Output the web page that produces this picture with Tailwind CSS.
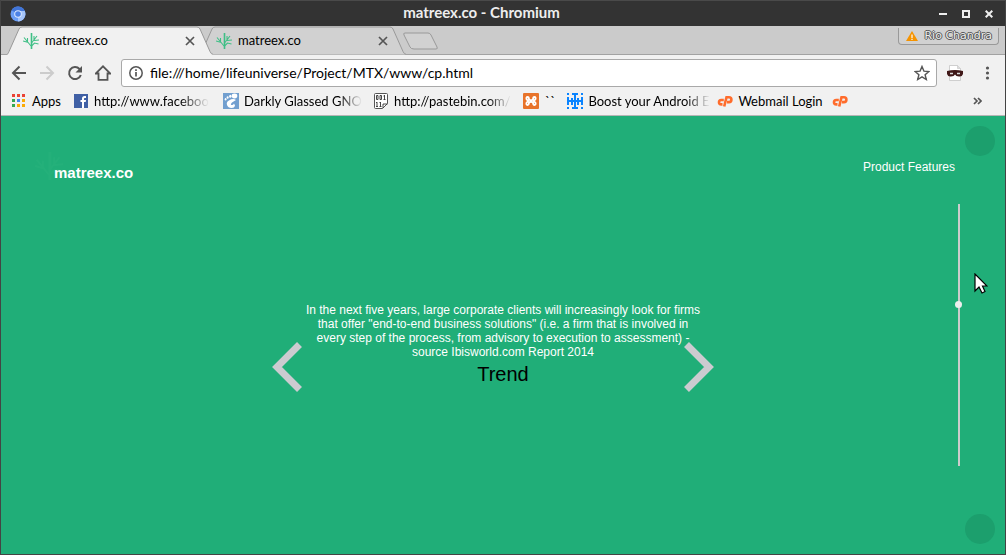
<!DOCTYPE html>
<html lang="en">
<head>
<meta charset="utf-8">
<meta name="viewport" content="width=device-width, initial-scale=1">
<title>matreex.co - Chromium</title>
<script src="https://cdn.jsdelivr.net/npm/@tailwindcss/browser@4"></script>
</head>
<body class="font-['Lato',sans-serif] text-sm text-black">
<svg class="hidden">
  <symbol id="tree" viewBox="0 0 16 16"><g fill="none" stroke="#3fbf86"><path d="M8.500 0v16" stroke-width="1.600"/><path d="M8 13 1 4.500M5.500 9.500 0 8M4.500 8.500V5M8.500 10 14 3M11 7V3M11 7.500l5-.5M8.500 13l3-3 4 1" stroke-width="1.100"/></g></symbol>
  <symbol id="tab-close" viewBox="0 0 10 10"><path d="m1 1 8 8M9 1 1 9" fill="none" stroke="#555" stroke-width="1.700"/></symbol>
  <symbol id="cpanel" viewBox="0 0 16 12"><path d="M6.800 5H4.200a2.200 2.200 0 0 0 0 4.400h1.300M7.200 11.500 9.500 2.300H12a2.300 2.300 0 0 1 0 4.800H10" fill="none" stroke="#ff6c2c" stroke-width="2.600"/></symbol>
</svg>

<div class="flex min-h-screen flex-col border-x border-b border-[#444] bg-[#f1f1f1]">
  <header class="flex h-[26px] items-center border-t border-[#4a4a4a] bg-[#333] pr-[10px] pl-[9px]">
    <svg class="size-4" viewBox="0 0 16 16"><circle cx="8" cy="8" r="7.500" fill="#6a9df5"/><path d="M8 8 1.500 4.200A7.500 7.500 0 0 1 14.800 5z" fill="#4175d8"/><path d="M8 15.500A7.500 7.500 0 0 0 14.800 5H8z" fill="#a5c5fb"/><circle cx="8" cy="8" r="3.800" fill="#dce8fd"/><circle cx="8" cy="8" r="2.800" fill="#4c82e6"/></svg>
    <h1 class="flex-1 pb-[3px] text-center text-[15px] leading-5 font-bold text-[#eee]">matreex.co - Chromium</h1>
    <div class="flex items-center gap-[11px] text-[#eee]">
      <button aria-label="Minimize" class="flex size-3 items-center justify-center"><span class="h-[2px] w-2 bg-current"></span></button>
      <button aria-label="Maximize" class="flex size-3 items-center justify-center"><span class="size-2 border-2 border-current"></span></button>
      <button aria-label="Close window" class="flex size-3 items-center justify-center"><svg class="size-2" viewBox="0 0 8 8"><path d="m.7.7 6.600 6.600M7.300.7.7 7.300" stroke="currentColor" stroke-width="2"/></svg></button>
    </div>
  </header>

  <nav aria-label="Tabs" class="flex h-[29px] items-start bg-[#cbcbcb] pl-[6px] text-[13px] shadow-[inset_0_-1px_0_#a2a2a2]">
    <div class="relative z-10 flex h-[29px] w-[206px] items-center pl-4">
      <svg class="absolute inset-0 h-[29px] w-[206px]" viewBox="0 0 206 29"><path d="M-1 29v-.5c2 0 2-1 3-3L12 3q1-2 3-2h175q2 0 3 2l10 22.500q1 3 4 3v.5z" fill="#f1f1f1"/><path d="M-1 28.500c2 0 2-1 3-3L12 3q1-2 3-2h175q2 0 3 2l10 22.500q1 3 4 3" fill="none" stroke="#999"/></svg>
      <svg class="relative size-4"><use href="#tree"/></svg>
      <button class="relative ml-[6px] flex-1 text-left">matreex.co</button>
      <button aria-label="Close tab" class="relative mr-[18px]"><svg class="size-[10px]"><use href="#tab-close"/></svg></button>
    </div>
    <div class="relative -ml-[13px] flex h-[29px] w-[206px] items-center pl-4">
      <svg class="absolute inset-0 h-[29px] w-[206px]" viewBox="0 0 206 29"><path d="M-1 28.500c2 0 2-1 3-3L12 3q1-2 3-2h175q2 0 3 2l10 22.500q1 3 4 3" fill="#d1d1d1" stroke="#999"/></svg>
      <svg class="relative size-4"><use href="#tree"/></svg>
      <button class="relative ml-[6px] flex-1 text-left">matreex.co</button>
      <button aria-label="Close tab" class="relative mr-[18px]"><svg class="size-[10px]"><use href="#tab-close"/></svg></button>
    </div>
    <button aria-label="New tab" class="-ml-1 pt-[6px]"><svg class="h-[19px] w-[38px]" viewBox="0 0 38 19"><path d="M3 1h23q2 0 3 2l6 12q1 2-1 2H12q-3 0-4-2L2 3q-1-2 1-2z" fill="#d1d1d1" stroke="#999"/></svg></button>
    <button class="mt-[2px] mr-[6px] ml-auto flex h-[17px] items-center gap-[6px] rounded-b-[4px] border border-t-0 border-[#999] bg-[#d1d1d1] pr-[6px] pl-[7px] font-['DejaVu_Sans',sans-serif] text-[11px] text-[#eee] [text-shadow:1px_0_#555,-1px_0_#555,0_1px_#555,0_-1px_#555]">
      <svg class="h-[10px] w-[12px]" viewBox="0 0 12 10"><path d="M6 0 12 10H0z" fill="#f59300"/><path d="M6 3.500V7M6 7.700v1.200" stroke="#fff" stroke-width="1.200"/></svg>
      Rio Chandra
    </button>
  </nav>

  <div class="flex h-9 items-center px-[10px]">
    <div class="flex items-center gap-3 text-[#555]">
      <button aria-label="Back"><svg class="size-4" viewBox="0 0 16 16" fill="none" stroke="currentColor" stroke-width="2"><path d="M15 8H2M8.500 1.500 2 8l6.500 6.500"/></svg></button>
      <button aria-label="Forward" class="text-[#ccc]"><svg class="size-4" viewBox="0 0 16 16" fill="none" stroke="currentColor" stroke-width="2"><path d="M1 8h13M7.500 1.500 14 8l-6.500 6.500"/></svg></button>
      <button aria-label="Reload"><svg class="size-4" viewBox="0 0 16 16" fill="none" stroke="currentColor" stroke-width="2"><path d="M13.800 10A6 6 0 1 1 12.500 4L14 5.500"/><path d="M15 1v6.500H8.500z" fill="currentColor" stroke="none"/></svg></button>
      <button aria-label="Home"><svg class="size-4" viewBox="0 0 16 16" fill="none" stroke="currentColor" stroke-width="1.800"><path d="M3.500 8.500v6.300h9V8.500h2.800L8 1.300.7 8.500z"/></svg></button>
    </div>
    <div class="ml-[10px] flex h-7 flex-1 items-center rounded-[3px] border border-[#a9a9a9] bg-white pr-[6px] pl-[7px]">
      <svg class="size-[14px]" viewBox="0 0 14 14" fill="none" stroke="#555"><circle cx="7" cy="7" r="6.200" stroke-width="1.500"/><path d="M7 6v4.500M7 3.200v1.700" stroke-width="1.700"/></svg>
      <input aria-label="Address" value="file:///home/lifeuniverse/Project/MTX/www/cp.html" class="ml-[7px] min-w-0 flex-1 bg-transparent outline-none">
      <button aria-label="Bookmark this page"><svg class="size-4" viewBox="0 0 16 16"><path d="m8 1.500 1.900 4.600 5 .4L11.100 9.700l1.200 4.800L8 11.900l-4.300 2.600 1.200-4.800L1.100 6.500l5-.4z" fill="none" stroke="#555" stroke-width="1.400"/></svg></button>
    </div>
    <button aria-label="Mask extension" class="ml-[10px]"><svg class="size-4" viewBox="0 0 16 16"><path d="M2.500.5h8l3 3v12h-11z" fill="#fff" stroke="#c4c4c4" stroke-width=".8"/><path d="M10.500.5v3h3" fill="#ddd" stroke="#c4c4c4" stroke-width=".6"/><path d="M0 6q8-2 16 0v3q-1 3-4 2.500-3 0-4-2-1 2-4 2Q1 12 0 9z" fill="#401818"/><path d="M3 8.500h3M10 8.500h3" stroke="#ddd" stroke-width="1.600"/></svg></button>
    <button aria-label="Menu" class="ml-4"><svg class="size-4" viewBox="0 0 16 16" fill="#555"><circle cx="8.500" cy="3" r="1.600"/><circle cx="8.500" cy="8" r="1.600"/><circle cx="8.500" cy="13" r="1.600"/></svg></button>
  </div>

  <nav aria-label="Bookmarks" class="flex h-[25px] items-center gap-3 border-b border-[#b6b6b6] pb-1 pl-[10px] text-[13px] leading-5 whitespace-nowrap">
    <a href="#" class="flex items-center gap-[5px]">
      <svg class="size-4" viewBox="0 0 16 16"><path d="M1 1h3v3H1zM6 1h3v3H6zM11 1h3v3h-3z" fill="#ea4335"/><path d="M1 6h3v3H1z" fill="#34a853"/><path d="M6 6h3v3H6z" fill="#4285f4"/><path d="M11 6h3v3h-3zM11 11h3v3h-3zM6 11h3v3H6z" fill="#fbab05"/><path d="M1 11h3v3H1z" fill="#34a853"/></svg>
      Apps</a>
    <a href="#" class="flex w-[138px] items-center gap-[5px]">
      <svg class="size-4 shrink-0" viewBox="0 0 16 16"><path d="M1 1h14v14H1z" fill="#4060a5"/><path d="M9 15V9H7.500V7H9V5.500Q9 3 11.500 3H13v2h-1.300q-.7 0-.7.800V7h2l-.3 2H11v6z" fill="#fff"/></svg>
      <span class="[mask-image:linear-gradient(to_right,black_75%,transparent)]">http://www.faceboo</span></a>
    <a href="#" class="flex w-[138px] items-center gap-[5px]">
      <svg class="size-4 shrink-0" viewBox="0 0 16 16"><path d="M0 0h16v16H0z" fill="#729fcf"/><g fill="#fff"><ellipse cx="11.500" cy="3" rx="2.800" ry="2.400"/><ellipse cx="7.300" cy="3.200" rx="1.200" ry="1.500"/><ellipse cx="4.600" cy="4.500" rx="1" ry="1.300"/><ellipse cx="2.600" cy="6.300" rx=".9" ry="1.200"/><path d="M13 7Q10 5 6 7.500 3 9 4 12q1 3 4.500 3 3 0 3.500-2.500l-1-2q-1 2-2.500 1.500T9 9.500z"/></g></svg>
      <span class="[mask-image:linear-gradient(to_right,black_80%,transparent)]">Darkly Glassed GNO</span></a>
    <a href="#" class="flex w-[138px] items-center gap-[5px]">
      <svg class="size-4 shrink-0" viewBox="0 0 16 16" fill="none" stroke="#555"><path d="M2.500.5h11q1 0 1 1v9l-5 5h-7q-1 0-1-1v-13q0-1 1-1z" fill="#fff"/><path d="M3.500 2.500h1.500v4H3.500zM7 2.500h1.500v4H7zM11.500 2v5M10.500 3h1M10.500 6.500h2M4 9v4.500M3 9.500h1M3 13.500h2M7.500 9v4.500M6.500 9.500h1M6.500 13.500h2M10 15v-4h4.500" stroke="#333" stroke-width=".9"/></svg>
      <span class="[mask-image:linear-gradient(to_right,black_80%,transparent)]">http://pastebin.com/</span></a>
    <a href="#" class="flex items-center gap-[6px]">
      <svg class="size-4" viewBox="0 0 16 16"><rect width="16" height="16" rx="1" fill="#e8732a"/><path d="M6 6.500Q6 4 4.500 4T3.500 6.200L5 8 3.500 9.800Q3 12 4.500 12T6 9.500q2-1.500 4 0 0 2.500 1.500 2.500t1-2.200L11 8l1.500-1.800Q13 4 11.500 4T10 6.500Q8 8 6 6.500z" fill="none" stroke="#fff" stroke-width="1.800"/></svg>
      ``</a>
    <a href="#" class="flex w-[138px] items-center gap-[5px]">
      <svg class="size-4 shrink-0" viewBox="0 0 16 16" fill="#0a84ff"><path d="M7 1h2v14H7zM5 0h6v2H5zM0 7h16v2H0zM4 5h2v7H4zM10 5h2v7h-2zM0 4h2v8H0zM14 4h2v8h-2zM0 0h2v2H0zM14 0h2v2h-2zM0 14h2v2H0zM14 14h2v2h-2zM5 14h6v2H5z"/></svg>
      <span class="[mask-image:linear-gradient(to_right,black_80%,transparent)]">Boost your Android E</span></a>
    <a href="#" class="flex items-center gap-[5px]"><svg class="h-3 w-4"><use href="#cpanel"/></svg>Webmail Login</a>
    <a href="#" aria-label="cPanel" class="-ml-[3px]"><svg class="h-3 w-4"><use href="#cpanel"/></svg></a>
    <button aria-label="More bookmarks" class="mr-[23px] ml-auto"><svg class="h-2 w-[9px]" viewBox="0 0 9 8" fill="none" stroke="#555" stroke-width="1.700"><path d="m1 1 3 3-3 3M5 1l3 3-3 3"/></svg></button>
  </nav>

  <main class="relative flex flex-1 bg-[#20ae78] font-['Liberation_Sans',sans-serif] text-xs text-white">
    <div class="flex flex-1 flex-col pl-[50px]">
      <div class="flex items-start justify-between pt-11">
        <a href="#" class="relative pt-[3px] pl-[3px] text-[15px] leading-5 font-bold">
          <svg class="absolute -top-2 -left-4 size-7 opacity-15"><use href="#tree"/></svg>
          matreex.co</a>
        <a href="#" class="leading-[14px]">Product Features</a>
      </div>
      <section class="flex flex-1 items-center justify-center pb-12">
        <div class="relative w-[400px] text-center">
          <p class="leading-[14px]">In the next five years, large corporate clients will increasingly look for firms that offer "end-to-end business solutions" (i.e. a firm that is involved in every step of the process, from advisory to execution to assessment) - source Ibisworld.com Report 2014</p>
          <h2 class="mt-[3px] text-xl leading-6 text-black">Trend</h2>
          <button aria-label="Previous" class="absolute top-[39px] -left-[31px]"><svg class="h-[50px] w-[30px]" viewBox="0 0 30 50"><path d="M27.500 2.500 5 25l22.500 22.500" fill="none" stroke="#cccbd0" stroke-width="7"/></svg></button>
          <button aria-label="Next" class="absolute top-[39px] -right-[11px]"><svg class="h-[50px] w-[30px]" viewBox="0 0 30 50"><path d="M2.500 2.500 25 25 2.500 47.500" fill="none" stroke="#cccbd0" stroke-width="7"/></svg></button>
        </div>
      </section>
    </div>
    <div class="flex flex-col py-[88px]">
      <input type="range" aria-label="Page position" min="0" max="100" value="38" class="min-h-0 w-[7px] flex-1 appearance-none bg-[linear-gradient(#ccc,#ccc)] bg-[length:2px_100%] bg-center bg-no-repeat outline-none [writing-mode:vertical-lr] [&::-webkit-slider-thumb]:size-[7px] [&::-webkit-slider-thumb]:appearance-none [&::-webkit-slider-thumb]:rounded-full [&::-webkit-slider-thumb]:bg-[#eee]">
    </div>
    <div class="flex flex-col justify-between py-[10px] pr-[10px] pl-[3px]">
      <button aria-label="Previous section" class="size-[30px] rounded-full bg-[#1c9f6d]"></button>
      <button aria-label="Next section" class="size-[30px] rounded-full bg-[#1c9f6d]"></button>
    </div>
    <svg class="absolute top-[157px] right-[17px] h-[22px] w-[14px]" viewBox="0 0 14 22"><path d="M1 1v17l4-4 3 6 3-1.500L8.500 13H13z" fill="#fff" stroke="#000" stroke-width="1.200"/></svg>
  </main>
</div>
</body>
</html>
